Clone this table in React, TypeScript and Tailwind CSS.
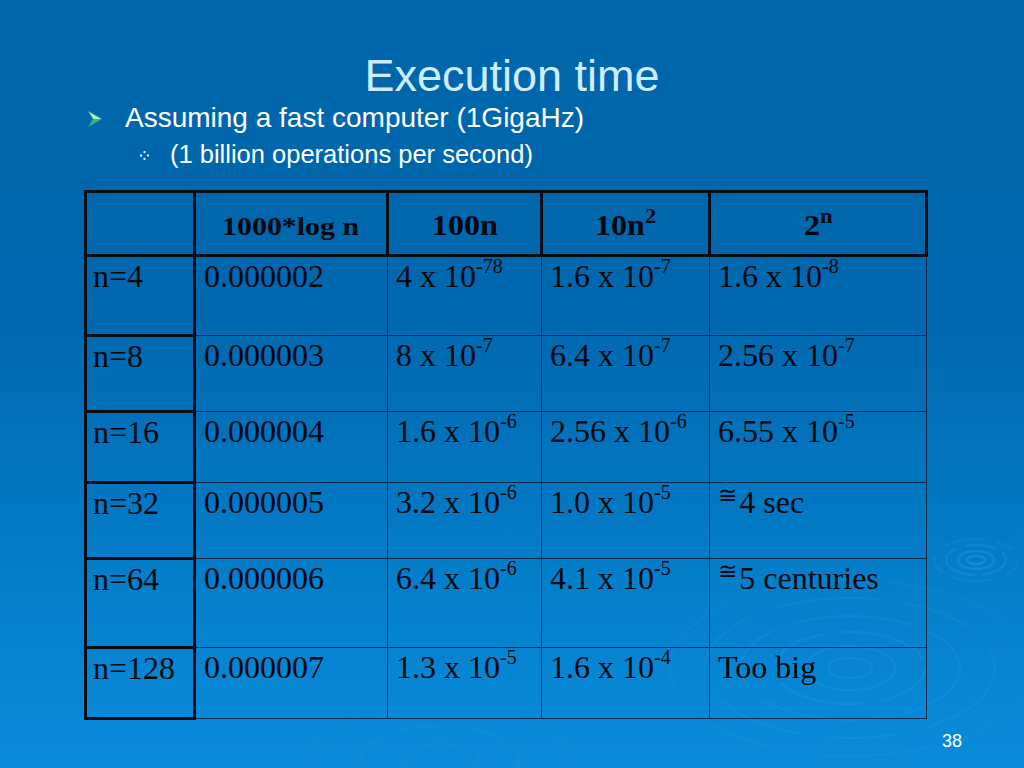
import React from "react";

type Cell = { base: string; sup?: string; approx?: boolean };

const rows: { n: string; h: string; cells: Cell[] }[] = [
  {
    n: "n=4",
    h: "h-[80px]",
    cells: [
      { base: "0.000002" },
      { base: "4 x 10", sup: "-78" },
      { base: "1.6 x 10", sup: "-7" },
      { base: "1.6 x 10", sup: "-8" },
    ],
  },
  {
    n: "n=8",
    h: "h-[76px]",
    cells: [
      { base: "0.000003" },
      { base: "8 x 10", sup: "-7" },
      { base: "6.4 x 10", sup: "-7" },
      { base: "2.56 x 10", sup: "-7" },
    ],
  },
  {
    n: "n=16",
    h: "h-[71px]",
    cells: [
      { base: "0.000004" },
      { base: "1.6 x 10", sup: "-6" },
      { base: "2.56 x 10", sup: "-6" },
      { base: "6.55 x 10", sup: "-5" },
    ],
  },
  {
    n: "n=32",
    h: "h-[76px]",
    cells: [
      { base: "0.000005" },
      { base: "3.2 x 10", sup: "-6" },
      { base: "1.0 x 10", sup: "-5" },
      { base: "4 sec", approx: true },
    ],
  },
  {
    n: "n=64",
    h: "h-[89px]",
    cells: [
      { base: "0.000006" },
      { base: "6.4 x 10", sup: "-6" },
      { base: "4.1 x 10", sup: "-5" },
      { base: "5 centuries", approx: true },
    ],
  },
  {
    n: "n=128",
    h: "h-[71px]",
    cells: [
      { base: "0.000007" },
      { base: "1.3 x 10", sup: "-5" },
      { base: "1.6 x 10", sup: "-4" },
      { base: "Too big" },
    ],
  },
];

function Arrow() {
  return (
    <svg width="14" height="16" viewBox="0 0 14 16" className="mt-[7px] shrink-0">
      <polygon points="0,0 14,8 5,8" fill="#b4f6c6" />
      <polygon points="5,8 14,8 0,16" fill="#2db894" />
      <polygon points="0,0 14,8 0,16 5,8" fill="none" stroke="#1d8f74" strokeWidth="0.6" />
    </svg>
  );
}

function Dots() {
  return (
    <svg width="9" height="9" viewBox="0 0 9 9" className="mt-[9px] shrink-0">
      <rect x="3.5" y="0" width="2" height="2" fill="#e6f4ff" transform="rotate(45 4.5 1)" />
      <rect x="3.5" y="7" width="2" height="2" fill="#e6f4ff" transform="rotate(45 4.5 8)" />
      <rect x="0" y="3.5" width="2" height="2" fill="#e6f4ff" transform="rotate(45 1 4.5)" />
      <rect x="7" y="3.5" width="2" height="2" fill="#e6f4ff" transform="rotate(45 8 4.5)" />
    </svg>
  );
}

function Ripples() {
  const ring = (cx: number, cy: number, rx: number, ry: number, op: number, dash?: string) => (
    <ellipse
      key={`${cx}-${cy}-${rx}`}
      cx={cx}
      cy={cy}
      rx={rx}
      ry={ry}
      fill="none"
      stroke="#5fbcf8"
      strokeOpacity={op}
      strokeWidth={2.5}
      strokeDasharray={dash}
    />
  );
  return (
    <svg className="absolute inset-0" width="1024" height="768" viewBox="0 0 1024 768">
      <g>
        {ring(976, 560, 9, 4, 0.22)}
        {ring(976, 560, 18, 9, 0.18)}
        {ring(976, 560, 30, 15, 0.14, "30 8 50 10")}
        {ring(976, 560, 42, 21, 0.09, "20 14 40 12")}
      </g>
      <g>
        {ring(850, 668, 22, 10, 0.1)}
        {ring(850, 668, 45, 22, 0.1)}
        {ring(850, 668, 75, 36, 0.1, "60 15 90 20")}
        {ring(850, 668, 110, 52, 0.09, "80 20 120 16")}
        {ring(850, 668, 145, 70, 0.08, "100 25 70 30")}
        {ring(850, 668, 180, 88, 0.06, "90 40 120 30")}
      </g>
      <g>
        {ring(440, 760, 40, 16, 0.06)}
        {ring(440, 760, 80, 34, 0.05, "40 20")}
        {ring(440, 760, 130, 55, 0.04, "60 30")}
      </g>
    </svg>
  );
}

const serif = "font-['Liberation_Serif','Times_New_Roman',serif]";

function Value({ c }: { c: Cell }) {
  return (
    <span>
      {c.approx && (
        <span className="relative -top-[10px] mr-[2px] text-[23px] font-['DejaVu_Sans',sans-serif]">≅</span>
      )}
      {c.base}
      {c.sup && <sup className="text-[20px] -top-[14px]">{c.sup}</sup>}
    </span>
  );
}

export default function App() {
  const thick = "border-[3px] border-[#070b12]";
  const thin = "border border-[#0d2a4a]";
  const head = `${thick} align-top pt-[17px] text-[30px] leading-none font-bold`;
  return (
    <div className="relative w-[1024px] h-[768px] overflow-hidden bg-[linear-gradient(180deg,#0066ab_0%,#0068af_42%,#0480cc_78%,#0a8cdb_100%)] font-['Liberation_Sans',Arial,sans-serif]">
      <Ripples />
      <div className="relative flex flex-col">
        <h1 className="mt-[53px] text-center text-[45px] leading-none text-[#cdeeff]">Execution time</h1>
        <div className="mt-[6px] flex items-start pl-[88px]">
          <Arrow />
          <span className="ml-[23px] text-[28px] leading-none text-white">Assuming a fast computer (1GigaHz)</span>
        </div>
        <div className="mt-[10px] flex items-start pl-[140px]">
          <Dots />
          <span className="ml-[21px] text-[25.5px] leading-none text-white">(1 billion operations per second)</span>
        </div>
        <table className={`mt-[22px] ml-[84px] w-[841px] table-fixed border-collapse ${serif} text-[#05080d]`}>
          <colgroup>
            <col className="w-[109px]" />
            <col className="w-[193px]" />
            <col className="w-[154px]" />
            <col className="w-[168px]" />
            <col className="w-[217px]" />
          </colgroup>
          <thead>
            <tr className="h-[64px]">
              <th className={thick}></th>
              <th className={head}>
                <span className="inline-block scale-x-[1.15] text-[26px]">1000*log n</span>
              </th>
              <th className={head}>
                <span className="inline-block scale-x-[1.07]">100n</span>
              </th>
              <th className={head}>
                <span className="inline-block scale-x-[1.07]">
                  10n<sup className="text-[21px] -top-[12px]">2</sup>
                </span>
              </th>
              <th className={head}>
                <span className="inline-block scale-x-[1.07]">
                  2<sup className="text-[21px] -top-[12px]">n</sup>
                </span>
              </th>
            </tr>
          </thead>
          <tbody>
            {rows.map((r) => (
              <tr key={r.n} className={r.h}>
                <td className={`${thick} align-top pt-[3px] pl-[6px] text-[32px] leading-none whitespace-nowrap`}>{r.n}</td>
                {r.cells.map((c, i) => (
                  <td key={i} className={`${thin} align-top pt-[3px] pl-[8px] text-[32px] leading-none whitespace-nowrap`}>
                    <Value c={c} />
                  </td>
                ))}
              </tr>
            ))}
          </tbody>
        </table>
        <div className="mt-[12px] flex justify-end pr-[62px]">
          <span className="text-[18px] leading-none text-white">38</span>
        </div>
      </div>
    </div>
  );
}
